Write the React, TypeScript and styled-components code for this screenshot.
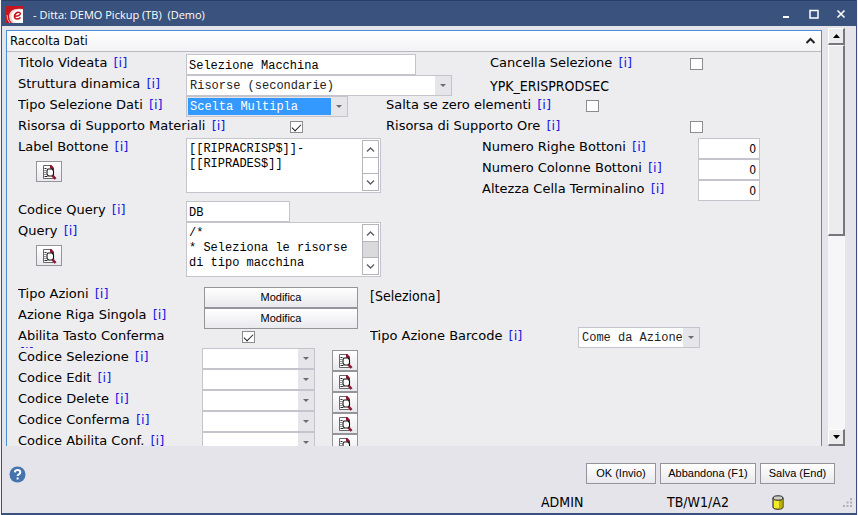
import React from "react";
import styled, { createGlobalStyle, css } from "styled-components";

const navy = "#3a527e";
const line = "#c3c4cc";
const verdana = `Verdana, "DejaVu Sans", sans-serif`;
const tahoma = `Tahoma, "DejaVu Sans Condensed", "Noto Sans", sans-serif`;
const mono = `"Liberation Mono", "Courier New", monospace`;
const small = `"Liberation Sans", Arial, sans-serif`;

const GlobalStyle = createGlobalStyle`
  * { box-sizing: border-box; }
  body { margin: 0; background: #f4f4f8; color: #000; font-family: ${verdana}; font-size: 13px; }
  button, input, select, textarea { margin: 0; padding: 0; border-radius: 0; color: inherit; }
  svg { display: block; }
`;

const Page = styled.div`
  height: 100vh;
  padding: 0 1px;
`;

const Window = styled.div`
  height: 100%;
  display: flex;
  flex-direction: column;
  background: #e4e4ea;
  border: solid ${navy};
  border-width: 0 1px 2px;
`;

const TitleBar = styled.header`
  flex: none;
  height: 26px;
  display: flex;
  align-items: center;
  padding: 1px 2px 0 4px;
  background: ${navy};
  border-top: 1px solid #2b3f66;
  color: #fff;
`;

const Title = styled.h1`
  flex: 1;
  margin: 2px 0 0 10px;
  font: 400 11px/16px "Open Sans", "Noto Sans", sans-serif;
  white-space: pre;
`;

const WindowButton = styled.button`
  width: 27px;
  height: 20px;
  display: grid;
  place-items: center;
  border: 0;
  background: none;
`;

const Main = styled.main`
  flex: 1;
  min-height: 0;
  display: flex;
  gap: 6px;
  padding: 2px 11px 0 4px;
`;

const Panel = styled.section`
  flex: 1;
  min-width: 0;
  margin-top: 2px;
  overflow: hidden;
  background: #ededf0;
  border: 1px solid #4a90d9;
  border-bottom: 0;
`;

const PanelHeader = styled.div`
  height: 21px;
  display: flex;
  align-items: center;
  justify-content: space-between;
  padding: 0 5px 0 3px;
  background: linear-gradient(#fff, #f3f3f5);
  border-bottom: 1px solid #b9b9bf;
`;

const PanelTitle = styled.h2`
  margin: 0;
  font: 400 13px/18px ${tahoma};
`;

const Toggle = styled.button`
  border: 0;
  background: none;
`;

const Form = styled.form`
  padding: 2px 0 0 11px;
`;

const Row = styled.div<{ $cols: string; $span?: number }>`
  display: grid;
  grid-template-columns: ${(p) => p.$cols};
  align-items: start;
  height: ${(p) => (p.$span ?? 1) * 21}px;
`;

const Stack = styled.div<{ $drop?: boolean }>`
  display: flex;
  flex-direction: column;
  padding-top: ${(p) => (p.$drop ? 2 : 0)}px;
`;

const Caption = styled.div`
  height: 21px;
  overflow: hidden;
  line-height: 17px;
`;

const Info = styled.a`
  margin-left: 2px;
  color: #1a1ae0;
  text-decoration: none;
`;

const Value = styled.output`
  padding-top: 3px;
  font: 14px/17px ${tahoma};
`;

const field = css`
  height: 21px;
  border: 1px solid ${line};
  outline: 0;
  background: #fff;
  font: 12px/17px ${mono};
`;

const TextInput = styled.input<{ $w: number }>`
  ${field}
  width: ${(p) => p.$w}px;
  padding: 2px 2px 0;
`;

const NumberInput = styled.input`
  ${field}
  width: 62px;
  padding: 1px 3px 0;
  font: 12px/17px ${tahoma};
  text-align: right;
`;

const Check = styled.input`
  appearance: none;
  width: 13px;
  height: 12px;
  margin: 4px 0 0;
  border: 1px solid #8b8b91;
  background: #fff;
  display: grid;
  place-items: center;
  &:checked::before {
    content: "";
    width: 8px;
    height: 4px;
    margin-top: -2px;
    border: solid #222;
    border-width: 0 0 1px 1px;
    transform: rotate(-45deg);
  }
`;

const Combo = styled.div<{ $w: number; $active?: boolean }>`
  display: grid;
  grid-template-columns: 1fr 16px;
  width: ${(p) => p.$w}px;
  height: 21px;
  border: 1px solid ${line};
  background: ${(p) => (p.$active ? "#e6e6ea" : "#fff")};
  select {
    grid-area: 1 / 1 / 2 / 3;
    appearance: none;
    height: 17px;
    margin: 1px 16px 1px 1px;
    padding: 1px 0 0 2px;
    border: 0;
    outline: 0;
    font: 12px/16px ${mono};
    background: ${(p) => (p.$active ? "#3399ff" : "#fff")};
    color: ${(p) => (p.$active ? "#fff" : "#222")};
  }
  svg {
    grid-area: 1 / 2;
    pointer-events: none;
    background: #e6e6ea;
  }
`;

const MemoBox = styled.div`
  display: flex;
  width: 195px;
  height: 55px;
  border: 1px solid ${line};
  background: #fff;
  padding: 1px;
  textarea {
    flex: 1;
    min-width: 0;
    padding: 2px 1px 0;
    border: 0;
    outline: 0;
    resize: none;
    overflow: hidden;
    background: none;
    font: 12px/15px ${mono};
  }
`;

const MemoBar = styled.div<{ $full?: boolean }>`
  width: 17px;
  display: flex;
  flex-direction: column;
  border: 1px solid #b4b4bc;
  background: ${(p) => (p.$full ? "#dadadc" : "#fff")};
`;

const MemoArrow = styled.button<{ $down?: boolean }>`
  height: 17px;
  margin-top: ${(p) => (p.$down ? "auto" : "0")};
  display: grid;
  place-items: center;
  border: solid #b4b4bc;
  border-width: ${(p) => (p.$down ? "1px 0 0" : "0 0 1px")};
  background: #fff;
`;

const PushButton = styled.button<{ $w: number }>`
  width: ${(p) => p.$w}px;
  height: 21px;
  display: grid;
  place-items: center;
  border: 1px solid #94949a;
  background: linear-gradient(#fff, #e9e9ee);
  font: 11px/17px ${small};
`;

const LookupButton = styled(PushButton)`
  margin: 2px 0 0 18px;
`;

const ScrollBar = styled.div`
  width: 17px;
  display: flex;
  flex-direction: column;
  background: #f6f6f8;
`;

const raised = css`
  border: 1px solid #fff;
  border-right: 2px solid #77777b;
  border-bottom: 2px solid #77777b;
  background: #ececee;
`;

const ScrollArrow = styled.button`
  ${raised}
  height: 17px;
  display: grid;
  place-items: center;
`;

const Thumb = styled.div`
  ${raised}
  height: 191px;
  margin-bottom: auto;
`;

const Footer = styled.footer`
  flex: none;
  height: 67px;
  padding-top: 17px;
`;

const Actions = styled.div`
  display: flex;
  gap: 4px;
  padding: 0 21px 0 7px;
`;

const HelpButton = styled.button`
  margin: 2px auto 0 0;
  border: 0;
  background: none;
`;

const Status = styled.div`
  display: flex;
  align-items: center;
  justify-content: flex-end;
  height: 29px;
  padding: 8px 4px 0;
  font: 14px/17px ${tahoma};
`;

const StatusItem = styled.span<{ $w: number }>`
  width: ${(p) => p.$w}px;
`;

const Arrow = () => (
  <svg width="16" height="19" viewBox="0 0 16 19">
    <path d="M5 8h6L8 11z" fill="#6a6a70" />
  </svg>
);

const Chevron = ({ down = false }: { down?: boolean }) => (
  <svg width="9" height="7" viewBox="0 0 9 7" fill="none" stroke="#5c5c62" strokeWidth="1.3">
    <path d={down ? "M1 1.5 4.5 5 8 1.5" : "M1 5.5 4.5 2 8 5.5"} />
  </svg>
);

const LookupIcon = () => (
  <svg width="15" height="16" viewBox="0 0 15 16">
    <path d="M1.500 1.500h7l3 3v10h-10z" fill="#fff" stroke="#66666c" />
    <path d="M8 1h1.500L12 4v2h-2L8 4z" fill="#8b1630" />
    <path d="M2.500 4.500h2M2.500 6.500h1M2.500 8.500h1M2.500 10.500h1M2.500 12.500h3" stroke="#222" />
    <path d="M6 5h4l1.500 2v3.500L10 12H6.500L5 10.500V6.500z" fill="#fff" stroke="#111" strokeWidth="1.1" />
    <path d="m10.500 11.500 3 3.500" stroke="#8b1630" strokeWidth="2.6" />
  </svg>
);

const Logo = () => (
  <svg width="17" height="17" viewBox="0 0 17 17">
    <path d="M0 0h17v17H0z" fill="#c5161f" />
    <path d="M17 3Q4 1 3 10q0 4 3 7h11z" fill="#f2d4d2" />
    <path d="M17 4Q7 3 5.500 9 5 14 9 17h8z" fill="#fff" />
    <path d="M1 9q0 5 3 8" fill="none" stroke="#f0b8b8" />
    <path d="M8.500 10.200q5 .2 5.800-2.400 0-1.800-2.300-1.600Q9 7 8.400 10q0 3 2.600 3 2 0 3.500-1.600" fill="none" stroke="#c5161f" strokeWidth="1.5" />
  </svg>
);

const Cylinder = () => (
  <svg width="12" height="15" viewBox="0 0 12 15">
    <path d="M1 3v9q0 2.200 5 2.200t5-2.200V3z" fill="#f4ea28" stroke="#111" />
    <path d="M7 4h3.500v8q0 1-3.500 1.500z" fill="#b9ad08" />
    <ellipse cx="6" cy="3" rx="5" ry="2.200" fill="#cfcfc4" stroke="#222" />
  </svg>
);

const Grip = () => (
  <svg width="9" height="9" viewBox="0 0 9 9" fill="#b0b0b8">
    <path d="M7 0h2v2H7zM7 3.500h2v2H7zM3.500 3.500h2v2h-2zM7 7h2v2H7zM3.500 7h2v2h-2zM0 7h2v2H0z" />
  </svg>
);

const Label = ({ id, text }: { id: string; text: string }) => (
  <Caption>
    <label htmlFor={id}>{text}</label> <Info href="#info">[i]</Info>
  </Caption>
);

const Select = ({ id, w, value = "", active }: { id: string; w: number; value?: string; active?: boolean }) => (
  <Combo $w={w} $active={active}>
    <select id={id}>
      <option>{value}</option>
    </select>
    <Arrow />
  </Combo>
);

const Memo = ({ id, value, full }: { id: string; value: string; full?: boolean }) => (
  <MemoBox>
    <textarea id={id} defaultValue={value} />
    <MemoBar $full={full}>
      <MemoArrow type="button" aria-label="Su"><Chevron /></MemoArrow>
      <MemoArrow type="button" aria-label="Giù" $down><Chevron down /></MemoArrow>
    </MemoBar>
  </MemoBox>
);

const codes = ["Codice Selezione", "Codice Edit", "Codice Delete", "Codice Conferma", "Codice Abilita Conf."];
const counters = ["Numero Righe Bottoni", "Numero Colonne Bottoni", "Altezza Cella Terminalino"];

export default function App() {
  return (
    <Page>
      <GlobalStyle />
      <Window>
        <TitleBar>
          <Logo />
          <Title>{"- Ditta: DEMO Pickup (TB)  (Demo)"}</Title>
          <WindowButton aria-label="Riduci">
            <svg width="10" height="10"><path d="M1 7h6v2H1z" fill="#fff" /></svg>
          </WindowButton>
          <WindowButton aria-label="Ingrandisci">
            <svg width="10" height="10"><path d="M1 1.500h8v7.500H1z" fill="none" stroke="#fff" strokeWidth="1.500" /></svg>
          </WindowButton>
          <WindowButton aria-label="Chiudi">
            <svg width="10" height="10"><path d="m1.500 1.500 7 7m0-7-7 7" stroke="#fff" strokeWidth="1.600" /></svg>
          </WindowButton>
        </TitleBar>

        <Main>
          <Panel>
            <PanelHeader>
              <PanelTitle>Raccolta Dati</PanelTitle>
              <Toggle aria-label="Comprimi">
                <svg width="11" height="8"><path d="m1.500 6 4-4 4 4" fill="none" stroke="#222" strokeWidth="2" /></svg>
              </Toggle>
            </PanelHeader>
            <Form>
              <Row $cols="168px 304px 200px 1fr">
                <Label id="titolo" text="Titolo Videata" />
                <TextInput id="titolo" $w={230} defaultValue="Selezione Macchina" />
                <Label id="cancella" text="Cancella Selezione" />
                <Check id="cancella" type="checkbox" />
              </Row>
              <Row $cols="168px 304px 1fr">
                <Label id="struttura" text="Struttura dinamica" />
                <Select id="struttura" w={266} value="Risorse (secondarie)" />
                <Value>YPK_ERISPRODSEC</Value>
              </Row>
              <Row $cols="168px 200px 200px 1fr">
                <Label id="tipo" text="Tipo Selezione Dati" />
                <Select id="tipo" w={162} value="Scelta Multipla" active />
                <Label id="salta" text="Salta se zero elementi" />
                <Check id="salta" type="checkbox" />
              </Row>
              <Row $cols="272px 96px 304px 1fr">
                <Label id="materiali" text="Risorsa di Supporto Materiali" />
                <Check id="materiali" type="checkbox" defaultChecked />
                <Label id="ore" text="Risorsa di Supporto Ore" />
                <Check id="ore" type="checkbox" />
              </Row>
              <Row $cols="168px 296px 216px 1fr" $span={3}>
                <Stack>
                  <Label id="bottone" text="Label Bottone" />
                  <LookupButton type="button" $w={26} aria-label="Cerca label"><LookupIcon /></LookupButton>
                </Stack>
                <Memo id="bottone" value={"[[RIPRACRISP$]]-\n[[RIPRADES$]]"} />
                <Stack>
                  {counters.map((c, i) => <Label key={c} id={`num${i}`} text={c} />)}
                </Stack>
                <Stack>
                  {counters.map((c, i) => <NumberInput key={c} id={`num${i}`} defaultValue="0" />)}
                </Stack>
              </Row>
              <Row $cols="168px 1fr">
                <Label id="codquery" text="Codice Query" />
                <TextInput id="codquery" $w={104} defaultValue="DB" />
              </Row>
              <Row $cols="168px 1fr" $span={3}>
                <Stack>
                  <Label id="query" text="Query" />
                  <LookupButton type="button" $w={26} aria-label="Cerca query"><LookupIcon /></LookupButton>
                </Stack>
                <Memo id="query" value={"/*\n* Seleziona le risorse\ndi tipo macchina"} full />
              </Row>
              <Row $cols="186px 166px 1fr" $span={2}>
                <Stack>
                  <Label id="azioni" text="Tipo Azioni" />
                  <Label id="riga" text="Azione Riga Singola" />
                </Stack>
                <Stack $drop>
                  <PushButton type="button" id="azioni" $w={154}>Modifica</PushButton>
                  <PushButton type="button" id="riga" $w={154}>Modifica</PushButton>
                </Stack>
                <Value>[Seleziona]</Value>
              </Row>
              <Row $cols="160px 64px 128px 208px 1fr">
                <Label id="tasto" text="Abilita Tasto Conferma" />
                <span />
                <Check id="tasto" type="checkbox" defaultChecked />
                <Label id="barcode" text="Tipo Azione Barcode" />
                <Select id="barcode" w={122} value="Come da Azione" />
              </Row>
              <Row $cols="184px 130px 1fr" $span={5}>
                <Stack>{codes.map((c, i) => <Label key={c} id={`cod${i}`} text={c} />)}</Stack>
                <Stack>{codes.map((c, i) => <Select key={c} id={`cod${i}`} w={113} />)}</Stack>
                <Stack $drop>
                  {codes.map((c) => (
                    <PushButton key={c} type="button" $w={26} aria-label={`Cerca ${c}`}><LookupIcon /></PushButton>
                  ))}
                </Stack>
              </Row>
            </Form>
          </Panel>
          <ScrollBar>
            <ScrollArrow aria-label="Scorri su"><svg width="7" height="4"><path d="M0 4 3.500 0 7 4z" /></svg></ScrollArrow>
            <Thumb />
            <ScrollArrow aria-label="Scorri giù"><svg width="7" height="4"><path d="M0 0h7L3.500 4z" /></svg></ScrollArrow>
          </ScrollBar>
        </Main>

        <Footer>
          <Actions>
            <HelpButton aria-label="Aiuto">
              <svg width="17" height="17" viewBox="0 0 17 17">
                <circle cx="8.500" cy="8.500" r="8" fill="#4473ae" />
                <path d="M5.800 6.400q.2-2.400 2.800-2.400t2.700 2.200q0 1.300-1.500 2.100-1.200.7-1.200 1.700M8.600 11.600v2" fill="none" stroke="#fff" strokeWidth="2" />
              </svg>
            </HelpButton>
            <PushButton $w={70}>OK (Invio)</PushButton>
            <PushButton $w={96}>Abbandona (F1)</PushButton>
            <PushButton $w={75}>Salva (End)</PushButton>
          </Actions>
          <Status>
            <StatusItem $w={126}>ADMIN</StatusItem>
            <StatusItem $w={105}>TB/W1/A2</StatusItem>
            <StatusItem $w={71}><Cylinder /></StatusItem>
            <Grip />
          </Status>
        </Footer>
      </Window>
    </Page>
  );
}
